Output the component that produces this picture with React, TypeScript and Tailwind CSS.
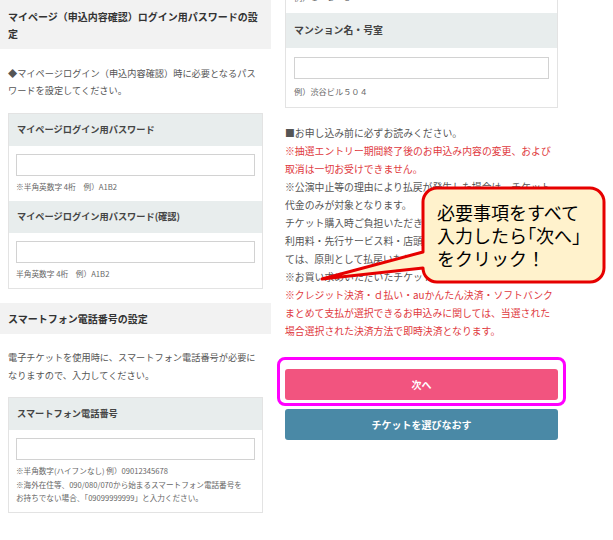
const jp = "font-['Noto_Sans_CJK_JP','Noto_Sans',sans-serif]";

function Field({ label, notes }: { label: string; notes: React.ReactNode }) {
  return (
    <>
      <div className="flex h-[32px] items-center bg-[#e8eded] pl-2 text-[9.2px] font-bold text-[#444]">
        {label}
      </div>
      <div className="px-[7px] pt-2 pb-2">
        <div className="h-[22px] border border-[#d2d2d2] bg-white" />
        <div className="mt-[5px] text-[7.7px] leading-[12px] text-[#666]">{notes}</div>
      </div>
    </>
  );
}

const leftHead = "bg-[#f2f2f2] px-2 text-[10px] font-bold leading-[17px] text-[#333]";
const body = "px-2 text-[9.2px] leading-[17px] text-[#555]";

const notice: { t: string; red?: boolean }[] = [
  { t: "■お申し込み前に必ずお読みください。" },
  { t: "※抽選エントリー期間終了後のお申込み内容の変更、および", red: true },
  { t: "取消は一切お受けできません。", red: true },
  { t: "※公演中止等の理由により払戻が発生した場合は、チケット" },
  { t: "代金のみが対象となります。" },
  { t: "チケット購入時ご負担いただきましたシステム" },
  { t: "利用料・先行サービス料・店頭発券手数料等につきまし" },
  { t: "ては、原則として払戻いたしません。" },
  { t: "※お買い求めいただいたチケットの変更はできません。" },
  { t: "※クレジット決済・ｄ払い・auかんたん決済・ソフトバンク", red: true },
  { t: "まとめて支払が選択できるお申込みに関しては、当選された", red: true },
  { t: "場合選択された決済方法で即時決済となります。", red: true },
];

export default function App() {
  return (
    <div className={`relative flex h-[540px] w-[613px] items-start gap-[14px] overflow-hidden bg-white ${jp}`}>
      {/* left column */}
      <div className="w-[271px] shrink-0">
        <div className={`${leftHead} pt-2 pb-[7px]`}>
          マイページ（申込内容確認）ログイン用パスワードの設定
        </div>
        <p className={`${body} mt-4 whitespace-nowrap`}>
          ◆マイページログイン（申込内容確認）時に必要となるパス
          <br />
          ワードを設定してください。
        </p>
        <div className="mx-2 mt-[14px] border border-[#e3e3e3]">
          <Field label="マイページログイン用パスワード" notes="※半角英数字 4桁　例）A1B2" />
          <Field label="マイページログイン用パスワード(確認)" notes="半角英数字 4桁　例）A1B2" />
        </div>
        <div className={`${leftHead} mt-[14px] flex h-[31px] items-center`}>スマートフォン電話番号の設定</div>
        <p className={`${body} mt-[14px] whitespace-nowrap leading-[18px]`}>
          電子チケットを使用時に、スマートフォン電話番号が必要に
          <br />
          なりますので、入力してください。
        </p>
        <div className="mx-2 mt-[13px] border border-[#e3e3e3]">
          <Field
            label="スマートフォン電話番号"
            notes={
              <>
                <div className="mb-[2px] text-[7.6px]">※半角数字(ハイフンなし) 例）09012345678</div>
                <div className="whitespace-nowrap text-[7.6px] leading-[12.5px]">
                  ※海外在住等、090/080/070から始まるスマートフォン電話番号を
                  <br />
                  お持ちでない場合、「09099999999」と入力ください。
                </div>
              </>
            }
          />
        </div>
      </div>

      {/* right column */}
      <div className="w-[273px] shrink-0">
        <div className="-mt-[10px] border border-[#e3e3e3]">
          <div className="px-2 pb-[10px] text-[8.2px] leading-[12px] text-[#666]">例）１－２－３</div>
          <div className="flex h-[35px] items-center bg-[#e8eded] pl-2 text-[9.9px] font-bold text-[#444]">
            マンション名・号室
          </div>
          <div className="px-2 pt-[9px] pb-[10px]">
            <div className="h-[22px] border border-[#d2d2d2] bg-white" />
            <div className="mt-[6px] text-[8.2px] leading-[12px] text-[#666]">例）渋谷ビル５０４</div>
          </div>
        </div>
        <div className="mt-4 text-[9.85px] leading-[18px]">
          {notice.map((l, i) => (
            <div key={i} className={`whitespace-nowrap ${l.red ? "text-[#e0393e]" : "text-[#555]"}`}>
              {l.t}
            </div>
          ))}
        </div>
        <button className="mt-[29px] flex h-[31px] w-full items-center justify-center rounded-[3px] bg-[#f2547f] text-[10px] font-bold text-white">
          次へ
        </button>
        <button className="mt-[9px] flex h-[31px] w-full items-center justify-center rounded-[3px] bg-[#4a89a6] text-[10px] font-bold text-white">
          チケットを選びなおす
        </button>
      </div>

      {/* highlight around next button */}
      <div className="absolute left-[277px] top-[357px] h-[49px] w-[289px] rounded-[8px] border-[3px] border-[#ff00ff]" />

      {/* callout */}
      <svg className="absolute left-0 top-0" width="613" height="540">
        <path
          d="M437,188 H590 A14,14 0 0 1 604,202 V268 A14,14 0 0 1 590,282 H437 A14,14 0 0 1 423,268 L322,279 L423,252 V202 A14,14 0 0 1 437,188 Z"
          fill="#fff2cc"
          stroke="#e60000"
          strokeWidth="3"
          strokeLinejoin="round"
        />
      </svg>
      <div className="absolute left-[437px] top-[201px] whitespace-nowrap text-[18px] leading-[23px] text-black">
        必要事項をすべて
        <br />
        入力したら<span className="[font-feature-settings:'palt']">「次へ」</span>
        <br />
        をクリック！
      </div>
    </div>
  );
}
